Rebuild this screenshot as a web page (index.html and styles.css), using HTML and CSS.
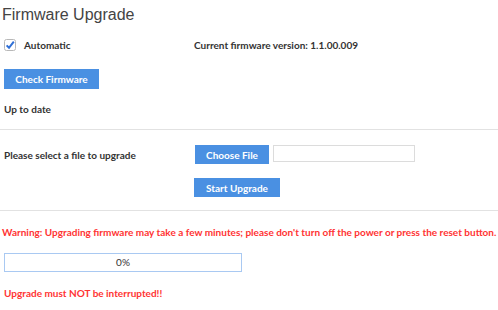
FILE: index.html
```html
<!DOCTYPE html>
<html>
<head>
<meta charset="utf-8">
<link rel="stylesheet" href="styles.css">
</head>
<body>
<div class="page">
  <h1 class="title">Firmware Upgrade</h1>
  <div class="row row-auto">
    <label class="label-col auto">
      <span class="check"><svg width="12" height="12" viewBox="0 0 12 12"><rect x="0.5" y="0.5" width="11" height="11" rx="2" fill="#fff" stroke="#b8b8b8"/><path d="M2.6 6.4 L5 8.8 L9.8 2.6" fill="none" stroke="#2f6fd6" stroke-width="2"/></svg></span>
      <span>Automatic</span>
    </label>
    <span class="text">Current firmware version: 1.1.00.009</span>
  </div>
  <div class="sec-check"><button class="btn btn-check">Check Firmware</button></div>
  <div class="status">Up to date</div>
  <hr class="rule rule1">
  <div class="row row-file">
    <span class="label-col">Please select a file to upgrade</span>
    <button class="btn btn-choose">Choose File</button>
    <span class="filebox"></span>
  </div>
  <div class="row row-start">
    <span class="label-col"></span>
    <button class="btn btn-start">Start Upgrade</button>
  </div>
  <hr class="rule rule2">
  <div class="warn">Warning: Upgrading firmware may take a few minutes; please don't turn off the power or press the reset button.</div>
  <div class="progress">0%</div>
  <div class="warn warn2">Upgrade must NOT be interrupted!!</div>
</div>
</body>
</html>
```
FILE: styles.css
```css
html, body { margin: 0; padding: 0; background: #fff; }
body { font-family: "Lato", "Liberation Sans", sans-serif; font-weight: 700; font-size: 10px; color: #333; }
.page { width: 498px; }
.title { font-family: "Liberation Sans", Arial, sans-serif; font-weight: normal; font-size: 16px; line-height: 18px; color: #444; margin: 0; padding: 6px 0 0 2px; height: 24px; box-sizing: border-box; }
.row { display: flex; align-items: center; padding-left: 4px; }
.label-col { width: 190px; flex: none; }
.row-auto { margin-top: 15px; height: 12px; }
.auto { display: flex; align-items: center; gap: 8px; }
.check { display: block; width: 12px; height: 12px; }
.check svg { display: block; }
.text { padding-top: 0; }
.sec-check { padding-left: 4px; margin-top: 18px; }
.btn { font-family: inherit; font-weight: 700; font-size: 10px; color: #fff; background: #4a90e2; border: 0; padding: 0; height: 20px; display: block; }
.btn-check { width: 95px; }
.status { padding-left: 4px; margin-top: 14px; line-height: 12px; }
.rule { border: 0; border-top: 1px solid #e2e2e2; margin: 0; }
.rule1 { margin-top: 14px; }
.row-file { margin-top: 15px; }
.btn-choose { width: 74px; height: 19px; margin-left: 1px; }
.filebox { width: 140px; height: 15px; border: 1px solid #dcdcdc; margin-left: 4px; align-self: flex-start; }
.row-start { margin-top: 14px; }
.btn-start { width: 86px; height: 19px; }
.rule2 { margin-top: 13px; }
.warn { color: #f33; padding-left: 2px; margin-top: 15px; line-height: 12px; white-space: nowrap; }
.progress { margin: 15px 0 0 4px; width: 236px; height: 17px; border: 1px solid #a9c9f2; text-align: center; line-height: 17px; color: #333; font-weight: 400; }
.warn2 { padding-left: 4px; margin-top: 15px; }
```
